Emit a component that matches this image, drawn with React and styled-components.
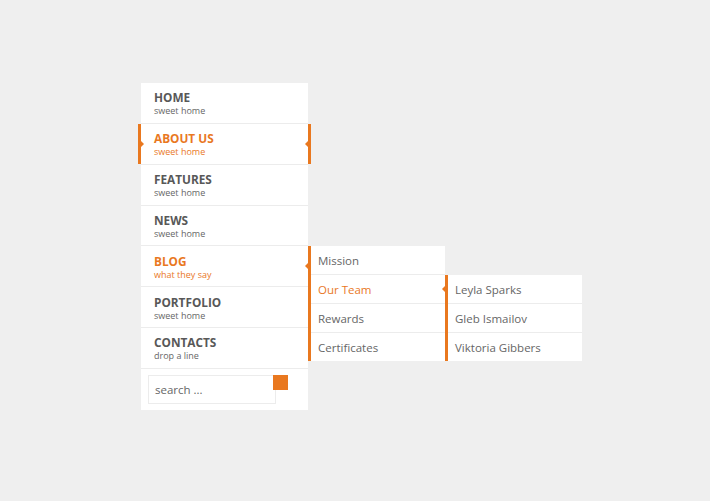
import React from 'react'
import styled, { createGlobalStyle, css } from 'styled-components'

const orange = '#e9781f'

const Global = createGlobalStyle`
  html, body {
    margin: 0;
    background: #efefef;
    font-family: "Open Sans", "Liberation Sans", sans-serif;
  }
`

const Page = styled.div`
  padding: 83px 0 0 141px;
  min-height: 501px;
  box-sizing: border-box;
`

const Menu = styled.ul`
  list-style: none;
  margin: 0;
  padding: 0;
  width: 167px;
  background: #fff;
`

const Item = styled.li`
  position: relative;
  height: 39.85px;
  border-bottom: 1px solid #ececec;
  box-sizing: content-box;

  ${({ $current }) => $current && css`
    &::before, &::after {
      content: '';
      position: absolute;
      top: 0;
      bottom: 0;
      width: 3px;
      background: ${orange};
    }
    &::before { left: -3px; }
    &::after { right: -3px; }
  `}
`

const Link = styled.a`
  display: flex;
  flex-direction: column;
  justify-content: center;
  height: 100%;
  padding: 0 13px;
  text-decoration: none;
  color: ${({ $active }) => ($active ? orange : '#585858')};
`

const Title = styled.span`
  font-size: 11.8px;
  font-weight: 700;
  line-height: 16px;
  text-transform: uppercase;
  margin-top: 1px;
`

const Sub = styled.span`
  font-size: 9px;
  line-height: 12px;
  color: ${({ $active }) => ($active ? orange : '#666')};
`

const Arrow = styled.span`
  position: absolute;
  top: 17px;
  width: 0;
  height: 0;
  border-top: 3px solid transparent;
  border-bottom: 3px solid transparent;
  z-index: 2;
  ${({ $dir }) => $dir === 'right'
    ? css`left: 0; border-left: 3px solid ${orange};`
    : css`right: 0; border-right: 3px solid ${orange};`}
`

const Dropdown = styled.ul`
  position: absolute;
  top: 0;
  left: 100%;
  list-style: none;
  margin: 0;
  padding: 0;
  width: 134px;
  background: #fff;
  border-left: 3px solid ${orange};
  z-index: 3;

  &::before {
    content: '';
    position: absolute;
    left: -6px;
    top: ${({ $arrowTop }) => $arrowTop}px;
    border-top: 3px solid transparent;
    border-bottom: 3px solid transparent;
    border-right: 3px solid ${orange};
  }
`

const DropItem = styled.li`
  position: relative;
  height: 28px;
  border-bottom: 1px solid #ececec;

  &:last-child { border-bottom: 0; }
`

const DropLink = styled.a`
  display: flex;
  align-items: center;
  height: 100%;
  padding: 0 7px;
  font-size: 11.5px;
  text-decoration: none;
  color: ${({ $active }) => ($active ? orange : '#666')};
`

const SearchRow = styled.li`
  display: flex;
  align-items: flex-start;
  height: 41px;
  padding: 6px 0 0 7px;
  box-sizing: border-box;
`

const SearchInput = styled.input`
  width: 128px;
  height: 29px;
  box-sizing: border-box;
  border: 1px solid #ececec;
  padding: 0 6px;
  font-family: inherit;
  font-size: 11.5px;
  color: #666;
  outline: none;

  &::placeholder { color: #666; }
`

const SearchButton = styled.button`
  width: 15px;
  height: 15px;
  padding: 0;
  margin-left: -3px;
  border: 0;
  background: ${orange};
  position: relative;
`

const items = [
  { title: 'Home', sub: 'sweet home' },
  { title: 'About us', sub: 'sweet home', current: true },
  { title: 'Features', sub: 'sweet home' },
  { title: 'News', sub: 'sweet home' },
  { title: 'Blog', sub: 'what they say', active: true, open: true },
  { title: 'Portfolio', sub: 'sweet home' },
  { title: 'Contacts', sub: 'drop a line' }
]

const about = ['Mission', 'Our Team', 'Rewards', 'Certificates']
const team = ['Leyla Sparks', 'Gleb Ismailov', 'Viktoria Gibbers']

function App () {
  return (
    <Page>
      <Global />
      <Menu>
        {items.map((it) => (
          <Item key={it.title} $current={it.current}>
            {it.current && <Arrow $dir='right' />}
            {it.current && <Arrow $dir='left' />}
            <Link href='#' $active={it.current || it.active}>
              <Title>{it.title}</Title>
              <Sub $active={it.current || it.active}>{it.sub}</Sub>
            </Link>
            {it.open && (
              <Dropdown $arrowTop={17}>
                {about.map((a) => (
                  <DropItem key={a}>
                    <DropLink href='#' $active={a === 'Our Team'}>{a}</DropLink>
                    {a === 'Our Team' && (
                      <Dropdown $arrowTop={11}>
                        {team.map((t) => (
                          <DropItem key={t}>
                            <DropLink href='#'>{t}</DropLink>
                          </DropItem>
                        ))}
                      </Dropdown>
                    )}
                  </DropItem>
                ))}
              </Dropdown>
            )}
          </Item>
        ))}
        <SearchRow>
          <SearchInput placeholder='search ...' />
          <SearchButton aria-label='search' />
        </SearchRow>
      </Menu>
    </Page>
  )
}

export default App
